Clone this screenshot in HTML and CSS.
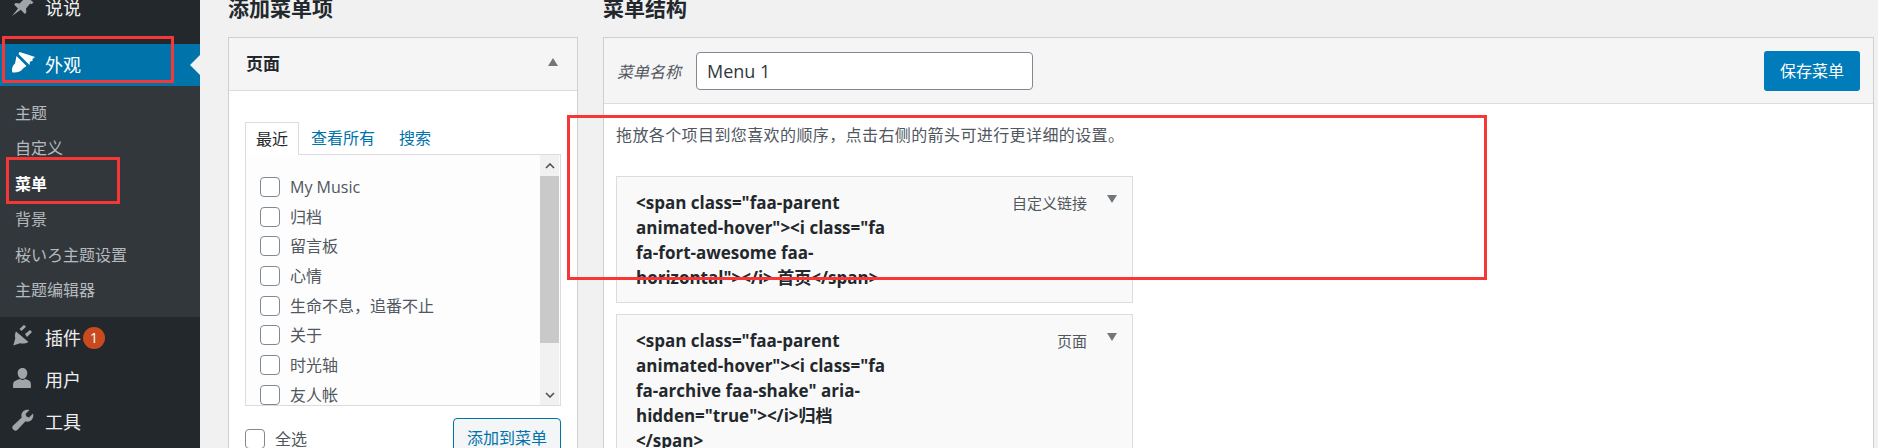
FILE: index.html
```html
<!DOCTYPE html>
<html lang="zh">
<head>
<meta charset="utf-8">
<title>菜单</title>
<link rel="stylesheet" href="styles.css">
</head>
<body>
<div class="page">
  <nav class="side">
    <div class="mi first"><svg class="ic" viewBox="0 0 24 24"><path d="M14.500 1.500l8 7-2 1.800-1.200-.8-4.300 5 .3 4-1.500 1.500-4-4.300L1 22l6-7.600-3.900-3.800 1.500-1.500 4 .3 4.800-4.700-.9-1.100z"/></svg><span>说说</span></div>
    <div class="mi active"><svg class="ic" viewBox="0 0 24 24"><path d="M8.500 1L15 3 24 6 21.500 8 21.500 10 19 10.500 18.500 14 7.500 3z"/><path d="M5.500 5L15.500 15 12 17.500C10.500 20.500 6 22 1.500 21.500 .5 19 1 15 4 12.500z"/></svg><span>外观</span></div>
    <ul class="sub">
      <li>主题</li>
      <li>自定义</li>
      <li class="cur">菜单</li>
      <li>背景</li>
      <li>桜いろ主题设置</li>
      <li>主题编辑器</li>
    </ul>
    <div class="mi"><svg class="ic" viewBox="0 0 24 24"><path d="M8.500 5L13 .8 15 2.800 10.500 7z"/><path d="M14 10L19 6 21 8 16 13z"/><path d="M5 7.500L17.500 18C15 19.500 11.500 20 9 19.300L2.300 21.500 4.300 14.300C3.500 12 4 9.500 5 7.500z"/></svg><span>插件</span><b class="badge">1</b></div>
    <div class="mi"><svg class="ic" viewBox="0 0 24 24"><path d="M11.500 2c3 0 4.800 2.200 4.800 5s-1.800 6-4.800 6-4.800-3.200-4.800-6 1.800-5 4.800-5zM5 14.500c1.500-1 3-1 4-1.500 1.500 1.300 3.500 1.300 5 0 1 .5 2.500.5 4 1.500 1.500 1 2 2 2 6.500 0 .8-.5 1-1 1H3c-.5 0-1-.2-1-1 0-4.500.5-5.500 3-6.500z"/></svg><span>用户</span></div>
    <div class="mi"><svg class="ic" viewBox="0 0 24 24"><path d="M22 5.500c.7 2.300.2 4.800-1.500 6.500-1.700 1.600-4 2-6 1.300L6.300 22c-1 1-2.500 1-3.500 0l-.8-.8c-1-1-1-2.500 0-3.500l8.700-8.200c-.7-2-.3-4.300 1.300-6C13.700 1.800 16.200 1.300 18.500 2l-4 4 1 2.500 2.500 1z"/></svg><span>工具</span></div>
  </nav>

  <main class="main">
    <section class="col-left">
      <h2 class="title">添加菜单项</h2>
      <div class="box">
        <div class="box-head"><h3>页面</h3><i class="tri up"></i></div>
        <div class="box-body">
          <div class="tabs">
            <span class="tab on">最近</span>
            <span class="tab">查看所有</span>
            <span class="tab">搜索</span>
          </div>
          <div class="panel">
            <ul class="list">
              <li><i class="cb"></i>My Music</li>
              <li><i class="cb"></i>归档</li>
              <li><i class="cb"></i>留言板</li>
              <li><i class="cb"></i>心情</li>
              <li><i class="cb"></i>生命不息，追番不止</li>
              <li><i class="cb"></i>关于</li>
              <li><i class="cb"></i>时光轴</li>
              <li><i class="cb"></i>友人帐</li>
            </ul>
            <div class="sbar">
              <svg class="chev" viewBox="0 0 10 6"><path d="M1 5l4-4 4 4"/></svg>
              <div class="thumb"></div>
              <svg class="chev end" viewBox="0 0 10 6"><path d="M1 1l4 4 4-4"/></svg>
            </div>
          </div>
          <div class="actions">
            <label class="all"><i class="cb"></i>全选</label>
            <span class="btn-add">添加到菜单</span>
          </div>
        </div>
      </div>
    </section>

    <section class="col-right">
      <h2 class="title">菜单结构</h2>
      <div class="box">
        <div class="menu-head">
          <span class="name-label">菜单名称</span>
          <span class="name-input">Menu 1</span>
          <span class="btn-save">保存菜单</span>
        </div>
        <div class="menu-body">
          <p class="hint">拖放各个项目到您喜欢的顺序，点击右侧的箭头可进行更详细的设置。</p>
          <div class="item">
            <div class="item-title">&lt;span class="faa-parent<br>animated-hover"&gt;&lt;i class="fa<br>fa-fort-awesome faa-<br>horizontal"&gt;&lt;/i&gt; 首页&lt;/span&gt;</div>
            <span class="item-type">自定义链接</span><i class="tri down"></i>
          </div>
          <div class="item">
            <div class="item-title">&lt;span class="faa-parent<br>animated-hover"&gt;&lt;i class="fa<br>fa-archive faa-shake" aria-<br>hidden="true"&gt;&lt;/i&gt;归档<br>&lt;/span&gt;</div>
            <span class="item-type">页面</span><i class="tri down"></i>
          </div>
        </div>
      </div>
    </section>
  </main>

  <div class="mark m1"></div>
  <div class="mark m2"></div>
  <div class="mark m3"></div>
</div>
</body>
</html>
```
FILE: styles.css
```css
* { box-sizing: border-box; }
html, body { margin: 0; height: 448px; overflow: hidden; }
body { font-family: "Open Sans", "Noto Sans CJK SC", sans-serif; color: #23282d; background: #f1f1f1; }
ul { list-style: none; margin: 0; padding: 0; }
i { font-style: normal; }

.page { position: relative; display: flex; height: 448px; overflow: hidden; }

.side { flex: 0 0 200px; width: 200px; height: 448px; background: #23282d; color: #eee; }
.mi { display: flex; align-items: center; height: 42px; font-size: 18px; }
.mi span { margin-left: 45px; line-height: 42px; }
.mi .ic { flex: 0 0 24px; width: 24px; height: 24px; margin: 0 -35px 4px 11px; fill: #a0a5aa; }
.mi.first { margin-top: -13px; margin-bottom: 15px; }
.mi.active { background: #0073aa; color: #fff; position: relative; }
.mi.active .ic { fill: #fff; }
.mi.active::after { content: ""; position: absolute; right: 0; top: 50%; margin-top: -10px; border: 10px solid transparent; border-right-color: #f1f1f1; border-left-width: 0; }
.badge { width: 22px; height: 22px; margin-left: 2px; border-radius: 50%; background: #ca4a1f; color: #fff; font-size: 14px; font-weight: 400; line-height: 22px; text-align: center; }

.sub { background: #32373c; height: 231px; padding-top: 10px; }
.sub li { height: 35.400px; line-height: 35.400px; padding-left: 15px; font-size: 16px; color: rgba(240,245,250,.7); }
.sub li.cur { color: #fff; font-weight: 700; }

.main { flex: 1; display: flex; align-items: flex-start; gap: 25px; padding: 0 4px 0 28px; height: 448px; }
.col-left { flex: 0 0 350px; }
.col-right { flex: 1; }
.title { margin: -6px 0 15px; font-size: 21px; line-height: 28px; font-weight: 700; color: #23282d; }

.box { border: 1px solid #ccd0d4; background: #fff; }

.box-head { display: flex; align-items: center; justify-content: space-between; height: 53px; padding: 0 19px 4px 17px; background: #f5f5f5; border-bottom: 1px solid #dcdcde; }
.box-head h3 { margin: 0; font-size: 17px; font-weight: 700; }
.tri { display: block; width: 0; height: 0; border-left: 5px solid transparent; border-right: 5px solid transparent; }
.tri.up { border-bottom: 8px solid #72777c; }
.tri.down { border-top: 8px solid #72777c; position: absolute; right: 15px; top: 18px; }

.box-body { padding: 31px 16px 0 16px; height: 400px; }
.tabs { display: flex; height: 32px; font-size: 16px; line-height: 32px; color: #0073aa; }
.tab { padding: 0 12px; }
.tab.on { color: #23282d; border: 1px solid #dcdcde; border-bottom: 0; background: #fff; position: relative; margin-bottom: -1px; height: 33px; padding: 0 10px; }

.panel { display: flex; height: 252px; border: 1px solid #dcdcde; overflow: hidden; background: #fdfdfd; }
.list { flex: 1; padding: 17px 0 0 14px; font-size: 16px; line-height: 24px; color: #50575e; }
.list li { display: flex; align-items: center; height: 29.700px; white-space: nowrap; }
.cb { flex: 0 0 20px; display: block; width: 20px; height: 20px; margin-right: 10px; border: 1px solid #7e8993; border-radius: 4px; background: #fff; }
.sbar { flex: 0 0 19px; display: flex; flex-direction: column; background: #f1f1f1; margin-right: 1px; }
.chev { display: block; width: 10px; height: 6px; margin: 8px auto 7px; fill: none; stroke: #505050; stroke-width: 1.600; }
.chev.end { margin: auto auto 7px; }
.thumb { height: 167px; background: #c9c9c9; }

.actions { display: flex; align-items: flex-start; justify-content: space-between; padding-top: 12px; font-size: 16px; line-height: 20px; color: #50575e; }
.all { display: flex; align-items: center; margin-top: 11px; }
.btn-add { height: 42px; padding: 0 13px; border: 1px solid #0073aa; border-radius: 4px; background: #f3f5f6; color: #0073aa; line-height: 38px; }

.menu-head { display: flex; align-items: center; height: 66px; padding: 0 13px; background: #f5f5f5; border-bottom: 1px solid #dcdcde; }
.name-label { flex: 0 0 79px; font-size: 16px; font-style: italic; color: #50575e; }
.name-input { width: 337px; height: 38px; padding: 0 10px; border: 1px solid #7e8993; border-radius: 4px; background: #fff; font-size: 18px; line-height: 36px; color: #32373c; }
.btn-save { margin-left: auto; width: 96px; height: 40px; border-radius: 3px; background: #007cba; color: #fff; font-size: 16px; line-height: 40px; text-align: center; }

.menu-body { padding: 0 12px; height: 400px; }
.hint { margin: 0 0 29px; padding-top: 19px; font-size: 16px; letter-spacing: .4px; line-height: 24px; color: #50575e; white-space: nowrap; }
.item { position: relative; width: 517px; margin-bottom: 11px; padding: 13px 19px 12px; border: 1px solid #dcdcde; background: #f9f9f9; }
.item-title { font-size: 17px; line-height: 25px; font-weight: 700; color: #23282d; white-space: nowrap; }
.item-type { position: absolute; right: 45px; top: 14px; font-size: 15px; line-height: 24px; color: #50575e; }

.mark { position: absolute; border: 3px solid #f73636; pointer-events: none; }
.m1 { left: 2px; top: 36px; width: 172px; height: 47px; }
.m2 { left: 6px; top: 157px; width: 114px; height: 47px; }
.m3 { left: 567px; top: 115px; width: 920px; height: 165px; }
```
